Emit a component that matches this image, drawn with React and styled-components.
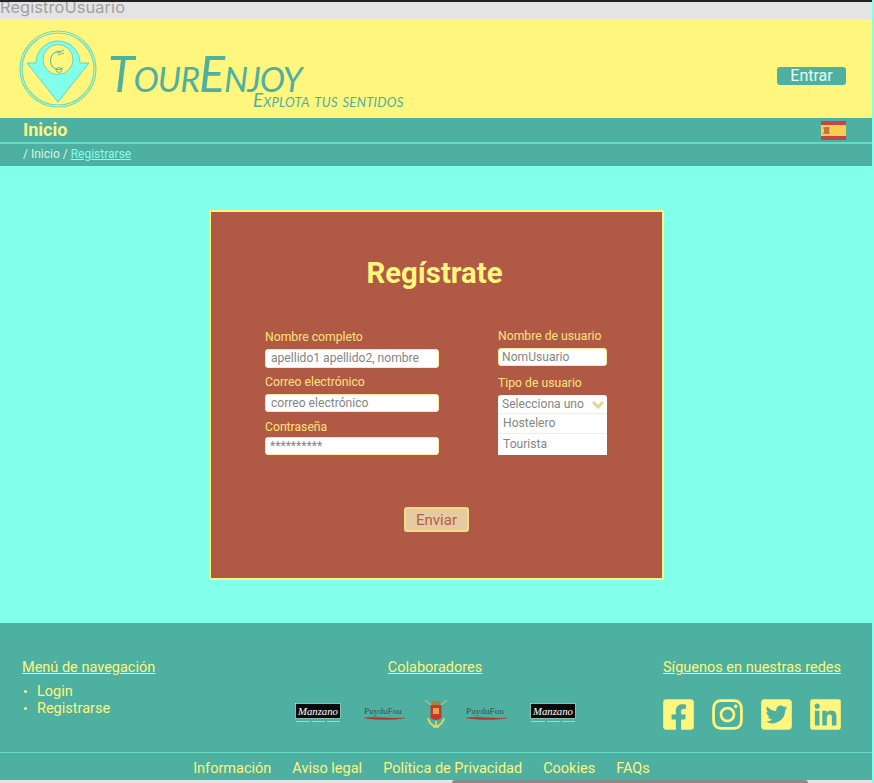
import React from "react";
import styled, { createGlobalStyle } from "styled-components";
import { FaFacebookSquare, FaInstagram, FaTwitterSquare, FaLinkedin } from "react-icons/fa";

const Y = "#fff67e";
const T = "#4db0a0";
const A = "#82ffeb";

const Global = createGlobalStyle`
  html, body { margin: 0; padding: 0; background: ${A}; }
  body { font-family: Roboto, "Liberation Sans", sans-serif; overflow: hidden; }
  * { box-sizing: border-box; }
`;
const Page = styled.div`width: 874px; height: 783px; overflow: hidden; display: flex; flex-direction: column; background: ${A}; padding-right: 2px;`;
const TitleBar = styled.div`height: 19px; flex: none; background: #e4e4e4; border-top: 2px solid #222; color: #a0a0a0; font-size: 16.4px; line-height: 10px; overflow: hidden; font-family: Inter, Roboto, sans-serif; letter-spacing: .1px;`;
const Header = styled.header`height: 99px; flex: none; background: ${Y}; display: flex; align-items: flex-start; padding: 11px 26px 0 19px;`;
const Brand = styled.div`display: flex; flex: 1; align-items: flex-start; gap: 11px;`;
const Wordmark = styled.div`display: flex; flex-direction: column; color: ${T}; margin-top: 22px; position: relative; width: 300px;`;
const WordName = styled.span`font-family: Lato, sans-serif; font-style: italic; font-weight: 400; font-size: 50px; line-height: 42px; letter-spacing: -1px; font-variant: small-caps; transform: scaleX(.97); transform-origin: left; white-space: nowrap;`;
const WordTag = styled.span`position: absolute; left: 145px; top: 38px; font-family: Lato, sans-serif; font-style: italic; font-size: 18.500px; line-height: 20px; font-variant: small-caps; white-space: nowrap; letter-spacing: .3px;`;
const Enter = styled.button`margin-top: 37px; width: 69px; height: 18px; background: ${T}; color: #eafff4; border: 0; border-radius: 3px; font: 400 16px/18px Roboto, sans-serif; padding: 0;`;
const NavBar = styled.nav`height: 24px; flex: none; background: ${T}; display: flex; align-items: center; justify-content: space-between; padding: 0 26px 0 23px;`;
const NavTitle = styled.span`color: ${Y}; font-size: 18px; font-weight: 700; line-height: 22px;`;
const Divider = styled.div`height: 2px; flex: none; background: #66dcc6;`;
const Crumbs = styled.div`height: 22px; flex: none; background: ${T}; color: #d9f7e2; font-size: 12px; line-height: 21px; padding-left: 23px;`;
const CrumbLink = styled.a`color: ${A}; text-decoration: underline;`;
const Main = styled.main`flex: 1; display: flex; justify-content: center; align-items: flex-start; padding-top: 44px;`;
const Card = styled.section`width: 455px; height: 370px; background: #b05a45; border: 2px solid ${Y}; margin-left: 1px; padding: 45px 0 0 54px; display: flex; flex-direction: column;`;
const CardTitle = styled.h1`margin: 0 0 41px -54px; padding-right: 4px; color: ${Y}; text-align: center; font-size: 29.3px; font-weight: 700; line-height: 32px;`;
const Columns = styled.div`display: flex; gap: 59px; align-items: flex-start;`;
const Col = styled.div`display: flex; flex-direction: column; width: ${p => p.$w}px; margin-top: ${p => p.$top || 0}px;`;
const Label = styled.label`color: #ffe27a; font-size: 12.2px; line-height: 15px; margin-top: ${p => p.$mt || 0}px; margin-bottom: ${p => p.$mb || 4}px;`;
const Input = styled.div`height: ${p => p.$h || 18}px; background: #fff; border: 1px solid #ffe9a0; border-radius: 3px; color: #858585; font-size: 12.1px; line-height: 16px; padding-left: ${p => p.$pl || 5}px; white-space: nowrap; overflow: hidden;`;
const Select = styled.div`height: 18px; background: #fff; border-radius: 3px 3px 0 0; color: #858585; font-size: 12.1px; line-height: 17px; padding-left: 4px; display: flex; align-items: center; justify-content: space-between; padding-right: 2px;`;
const Option = styled.div`height: ${p => p.$h}px; background: #fff; color: #858585; font-size: 12.1px; line-height: ${p => p.$lh}px; padding-left: 5px; border-top: 1px solid #fff2a8;`;
const Send = styled.button`align-self: center; margin: 52px 54px 0 0; width: 65px; height: 25px; border: 2px solid #f6dc88; border-radius: 3px; background: #e6cba0; color: #b2604b; font: 400 15px/20px Roboto, sans-serif; padding: 0;`;
const Footer = styled.footer`height: 157px; flex: none; background: ${T}; display: flex; flex-direction: column; color: ${Y};`;
const FootCols = styled.div`height: 130px; flex: none; display: grid; grid-template-columns: 1fr auto 1fr; padding: 36px 24px 0 22px; border-bottom: 1px solid #66dcc6;`;
const FootCol = styled.div`display: flex; flex-direction: column; align-items: ${p => p.$a || "flex-start"}; padding-right: ${p => p.$pr || 0}px;`;
const FootHead = styled.a`font-size: 14.5px; line-height: 18px; text-decoration: underline; color: ${Y};`;
const Menu = styled.ul`list-style: none; margin: 6px 0 0; padding: 0; font-size: 14.5px; line-height: 17px;`;
const MenuItem = styled.li`display: flex; align-items: center; gap: 10px; &::before { content: ""; width: 3px; height: 3px; border-radius: 50%; background: ${Y}; margin-left: 2px; }`;
const Logos = styled.div`display: flex; align-items: center; margin-top: 22px;`;
const LogoSlot = styled.div`display: flex; margin-left: ${p => p.$ml || 0}px;`;
const Socials = styled.div`display: flex; gap: 14px; margin: 20px -2px 0 0; font-size: 35px; line-height: 0;`;
const Social = styled.span`display: inline-flex; color: ${Y};`;
const Legal = styled.div`flex: 1; display: flex; justify-content: center; gap: 21px; font-size: 14.5px; line-height: 32px; padding-right: 29px;`;
const Bottom = styled.div`height: 3px; flex: none; background: #e4e4e4; position: relative;`;
const Thumb = styled.div`position: absolute; left: 452px; top: 0; width: 356px; height: 3px; background: #8a8a8a; border-radius: 3px 3px 0 0;`;

const Pin = () => (
  <svg width="78" height="78" viewBox="0 0 78 78">
    <circle cx="39" cy="39" r="38" fill="none" stroke="#66dcc6" strokeWidth="1.2" />
    <circle cx="39" cy="39" r="36" fill="none" stroke="#66dcc6" strokeWidth="1.2" />
    <path d="M17 33 A22 22 0 1 1 61 33 L70 33 L39 72 L8 33 Z" fill={A} stroke="#5cd9c2" strokeWidth="1" />
    <circle cx="39" cy="29.500" r="15" fill={Y} stroke="#4db0a0" strokeWidth=".6" />
    <path d="M42 22 A8 9 0 1 0 44 38" fill="none" stroke="#4db0a0" strokeWidth="1" />
    <path d="M38 23 l7 -3 M39 25 l6 -2" stroke="#4db0a0" strokeWidth=".8" />
    <ellipse cx="40" cy="40" rx="3" ry="2.400" fill="none" stroke="#4db0a0" strokeWidth=".8" />
  </svg>
);
const Flag = () => (
  <svg width="25" height="19" viewBox="0 0 25 19">
    <rect width="25" height="19" fill="#c8414b" />
    <rect y="4" width="25" height="11" fill="#f8d04f" />
    <rect x="3" y="6" width="5" height="7" fill="#c8704b" rx="1" />
    <path d="M2 7h1M2 12h1M8 7h1M8 12h1" stroke="#b06a50" />
  </svg>
);
const Manzano = () => (
  <svg width="46" height="22" viewBox="0 0 46 22">
    <rect x=".5" y=".5" width="45" height="15" fill="#0a0a0a" stroke="#cfe" strokeWidth=".6" />
    <text x="3" y="11.500" fill="#fff" fontFamily="Liberation Serif, serif" fontStyle="italic" fontSize="11" textLength="40" lengthAdjust="spacingAndGlyphs">Manzano</text>
    <path d="M1 18.500h14M17 18.500h13M32 18.500h13" stroke="#dfeee8" strokeWidth="1" opacity=".6" />
  </svg>
);
const Puy = () => (
  <svg width="42" height="22" viewBox="0 0 42 22">
    <text x="0" y="11" fill="#37544f" fontFamily="Liberation Serif, serif" fontSize="8" textLength="38" lengthAdjust="spacingAndGlyphs">PuyduFou</text>
    <path d="M0 15 C12 13 24 16 41 15 C30 17 14 17 0 15Z" fill="#b8322e" stroke="#b8322e" strokeWidth=".4" />
  </svg>
);
const Arms = () => (
  <svg width="22" height="30" viewBox="0 0 22 30">
    <path d="M0 1 L6 6 M22 1 L16 6" stroke="#d8d08a" strokeWidth="1" />
    <path d="M7 2 h8 v4 h-8Z" fill="#a8843a" />
    <path d="M5.500 6 h11 v13 q-5.500 4 -11 0Z" fill="#c8382e" />
    <rect x="8" y="9" width="6" height="6" fill="#e8c04a" opacity=".8" />
    <path d="M3 19 q1 6 8 9 q7 -3 8 -9 M11 22 v6 M8 28h6" fill="none" stroke="#e8d860" strokeWidth="1.6" />
  </svg>
);

export default function App() {
  return (
    <Page>
      <Global />
      <TitleBar>RegistroUsuario</TitleBar>
      <Header>
        <Brand>
          <Pin />
          <Wordmark>
            <WordName>TourEnjoy</WordName>
            <WordTag>Explota tus sentidos</WordTag>
          </Wordmark>
        </Brand>
        <Enter>Entrar</Enter>
      </Header>
      <NavBar>
        <NavTitle>Inicio</NavTitle>
        <Flag />
      </NavBar>
      <Divider />
      <Crumbs>/ Inicio / <CrumbLink>Registrarse</CrumbLink></Crumbs>
      <Main>
        <Card>
          <CardTitle>Regístrate</CardTitle>
          <Columns>
            <Col $w={174}>
              <Label>Nombre completo</Label>
              <Input $h={19}>apellido1 apellido2, nombre</Input>
              <Label $mt={7}>Correo electrónico</Label>
              <Input>correo electrónico</Input>
              <Label $mt={8} $mb={2}>Contraseña</Label>
              <Input $pl={4}>**********</Input>
            </Col>
            <Col $w={109} $top={-1}>
              <Label>Nombre de usuario</Label>
              <Input $pl={3}>NomUsuario</Input>
              <Label $mt={10}>Tipo de usuario</Label>
              <Select>
                Selecciona uno
                <svg width="14" height="10" viewBox="0 0 14 10"><path d="M2 3 L7 8 L12 3" fill="none" stroke="#e0d890" strokeWidth="3" /></svg>
              </Select>
              <Option $h={20} $lh={18}>Hostelero</Option>
              <Option $h={22} $lh={21}>Tourista</Option>
            </Col>
          </Columns>
          <Send>Enviar</Send>
        </Card>
      </Main>
      <Footer>
        <FootCols>
          <FootCol>
            <FootHead>Menú de navegación</FootHead>
            <Menu>
              <MenuItem>Login</MenuItem>
              <MenuItem>Registrarse</MenuItem>
            </Menu>
          </FootCol>
          <FootCol $a="center">
            <FootHead>Colaboradores</FootHead>
            <Logos>
              <LogoSlot><Manzano /></LogoSlot>
              <LogoSlot $ml={23}><Puy /></LogoSlot>
              <LogoSlot $ml={19}><Arms /></LogoSlot>
              <LogoSlot $ml={19}><Puy /></LogoSlot>
              <LogoSlot $ml={22}><Manzano /></LogoSlot>
            </Logos>
          </FootCol>
          <FootCol $a="flex-end" $pr={7}>
            <FootHead>Síguenos en nuestras redes</FootHead>
            <Socials>
              <Social><FaFacebookSquare /></Social>
              <Social><FaInstagram /></Social>
              <Social><FaTwitterSquare /></Social>
              <Social><FaLinkedin /></Social>
            </Socials>
          </FootCol>
        </FootCols>
        <Legal>
          <span>Información</span>
          <span>Aviso legal</span>
          <span>Política de Privacidad</span>
          <span>Cookies</span>
          <span>FAQs</span>
        </Legal>
      </Footer>
      <Bottom><Thumb /></Bottom>
    </Page>
  );
}
